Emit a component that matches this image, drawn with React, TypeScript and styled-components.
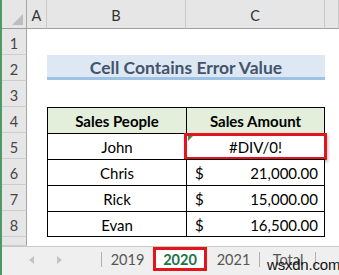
import React from "react";
import styled, { createGlobalStyle, css } from "styled-components";

const GlobalStyle = createGlobalStyle`
  html, body { margin: 0; padding: 0; background: #fff; overflow: hidden; }
  body { font-family: Lato, "Noto Sans", sans-serif; }
`;

const Frame = styled.div`
  position: relative;
  width: 337px;
  height: 275px;
  border-left: 2px solid #4f9a64;
  display: flex;
  flex-direction: column;
  overflow: hidden;
`;

const Sheet = styled.div`
  display: grid;
  grid-template-columns: 25px 20px 139px 139px 1fr;
  grid-template-rows: 29px repeat(8, 26px) 9px;
`;

const Corner = styled.div`
  position: relative;
  background: #e6e6e6;
  border-right: 1px solid #a6a6a6;
  border-bottom: 1px solid #9e9e9e;
  &::after {
    content: "";
    position: absolute;
    right: 3px;
    bottom: 3px;
    width: 0;
    height: 0;
    border-left: 11px solid transparent;
    border-bottom: 11px solid #bdbdbd;
  }
`;

const ColHead = styled.div`
  background: #e6e6e6;
  border-right: 1px solid #c9c9c9;
  border-bottom: 1px solid #9e9e9e;
  display: flex;
  align-items: center;
  justify-content: center;
  padding-top: 2px;
  font-size: 14.5px;
  color: #333;
`;

const RowHead = styled.div`
  background: #e6e6e6;
  border-right: 1px solid #a6a6a6;
  border-bottom: 1px solid #cdcdcd;
  display: flex;
  align-items: center;
  justify-content: center;
  padding-top: 3px;
  font-size: 14.5px;
  color: #444;
`;

const Cell = styled.div`
  background: #fff;
`;

const TitleCell = styled.div`
  grid-column: span 2;
  background: #dde8f4;
  border-bottom: 3px solid #9fc1e4;
  margin-bottom: 1px;
  display: flex;
  align-items: center;
  justify-content: center;
  padding-top: 2px;
  font-size: 17.5px;
  font-weight: 700;
  color: #44546a;
`;

const TableCell = styled.div<{ $first?: boolean; $head?: boolean; $last?: boolean }>`
  position: relative;
  border-top: 1px solid #000;
  border-left: 1px solid #000;
  ${(p) => !p.$first && css`border-right: 1px solid #000;`}
  ${(p) => p.$last && css`border-bottom: 1px solid #000;`}
  background: ${(p) => (p.$head ? "#e3efda" : "#fff")};
  display: flex;
  align-items: center;
  justify-content: center;
  padding-top: 1px;
  font-size: 15px;
  font-weight: ${(p) => (p.$head ? 700 : 400)};
  color: #000;
`;

const AmountCell = styled(TableCell)`
  justify-content: space-between;
  padding: 1px 6px 0 8px;
`;

const Highlight = styled.div`
  position: absolute;
  left: -3px;
  top: -1px;
  right: -3px;
  bottom: -1px;
  border: 3px solid #e3141c;
  box-shadow: 1px 2px 3px rgba(0, 0, 0, 0.25);
  pointer-events: none;
`;

const ErrorMark = styled.div`
  position: absolute;
  left: 1px;
  top: 1px;
  width: 0;
  height: 0;
  border-top: 6px solid #3f8a4a;
  border-right: 6px solid transparent;
`;

const TabBar = styled.div`
  position: relative;
  flex: 1;
  background: #efefef;
  border-top: 1px solid #c8c8c8;
  display: flex;
  align-items: flex-start;
`;

const Nav = styled.div`
  width: 100px;
  display: flex;
  align-items: center;
  gap: 23px;
  padding-left: 27px;
  box-sizing: border-box;
  border-right: 1px solid #b0b0b0;
  margin-top: 5px;
  height: 15px;
`;

const Arrow = styled.span<{ $dir: "left" | "right" }>`
  width: 0;
  height: 0;
  border-top: 4px solid transparent;
  border-bottom: 4px solid transparent;
  ${(p) =>
    p.$dir === "left"
      ? css`border-right: 5px solid #c3c3c3;`
      : css`border-left: 5px solid #c3c3c3;`}
`;

const Tab = styled.div<{ $active?: boolean; $sep?: boolean; $w: number }>`
  position: relative;
  width: ${(p) => p.$w}px;
  height: 24px;
  box-sizing: border-box;
  display: flex;
  align-items: center;
  justify-content: center;
  padding-top: 1px;
  font-size: 14.5px;
  color: ${(p) => (p.$active ? "#217346" : "#555")};
  font-weight: ${(p) => (p.$active ? 700 : 400)};
  background: ${(p) => (p.$active ? "#fff" : "transparent")};
  ${(p) =>
    p.$sep &&
    css`
      &::after {
        content: "";
        position: absolute;
        right: 0;
        top: 5px;
        height: 15px;
        border-right: 1px solid #b0b0b0;
      }
    `}
`;

const TabBox = styled.div`
  position: absolute;
  inset: 0;
  border: 3px solid #e3141c;
  pointer-events: none;
`;

const Watermark = styled.div`
  position: absolute;
  left: 265px;
  top: 9px;
  font-family: "Liberation Sans", Arial, sans-serif;
  font-size: 15px;
  color: #111;
  letter-spacing: -0.2px;
`;

const people = [
  { name: "Chris", amount: "21,000.00" },
  { name: "Rick", amount: "15,000.00" },
  { name: "Evan", amount: "16,500.00" },
];

export default function App() {
  return (
    <>
      <GlobalStyle />
      <Frame>
        <Sheet>
          <Corner />
          <ColHead>A</ColHead>
          <ColHead>B</ColHead>
          <ColHead>C</ColHead>
          <ColHead />

          <RowHead>1</RowHead>
          <Cell />
          <Cell />
          <Cell />
          <Cell />

          <RowHead>2</RowHead>
          <Cell />
          <TitleCell>Cell Contains Error Value</TitleCell>
          <Cell />

          <RowHead>3</RowHead>
          <Cell />
          <Cell />
          <Cell />
          <Cell />

          <RowHead>4</RowHead>
          <Cell />
          <TableCell $first $head>Sales People</TableCell>
          <TableCell $head>Sales Amount</TableCell>
          <Cell />

          <RowHead>5</RowHead>
          <Cell />
          <TableCell $first>John</TableCell>
          <TableCell>
            <ErrorMark />
            #DIV/0!
            <Highlight />
          </TableCell>
          <Cell />

          {people.map((p, i) => (
            <React.Fragment key={p.name}>
              <RowHead>{6 + i}</RowHead>
              <Cell />
              <TableCell $first $last={i === people.length - 1}>
                {p.name}
              </TableCell>
              <AmountCell $last={i === people.length - 1}>
                <span>$</span>
                <span>{p.amount}</span>
              </AmountCell>
              <Cell />
            </React.Fragment>
          ))}

          <RowHead />
          <Cell />
          <Cell />
          <Cell />
          <Cell />
        </Sheet>
        <TabBar>
          <Nav>
            <Arrow $dir="left" />
            <Arrow $dir="right" />
          </Nav>
          <Tab $w={51}>2019</Tab>
          <Tab $w={54} $active>
            2020
            <TabBox />
          </Tab>
          <Tab $w={53} $sep>2021</Tab>
          <Tab $w={56} $sep>Total</Tab>
          <Watermark>wsxdn.com</Watermark>
        </TabBar>
      </Frame>
    </>
  );
}
